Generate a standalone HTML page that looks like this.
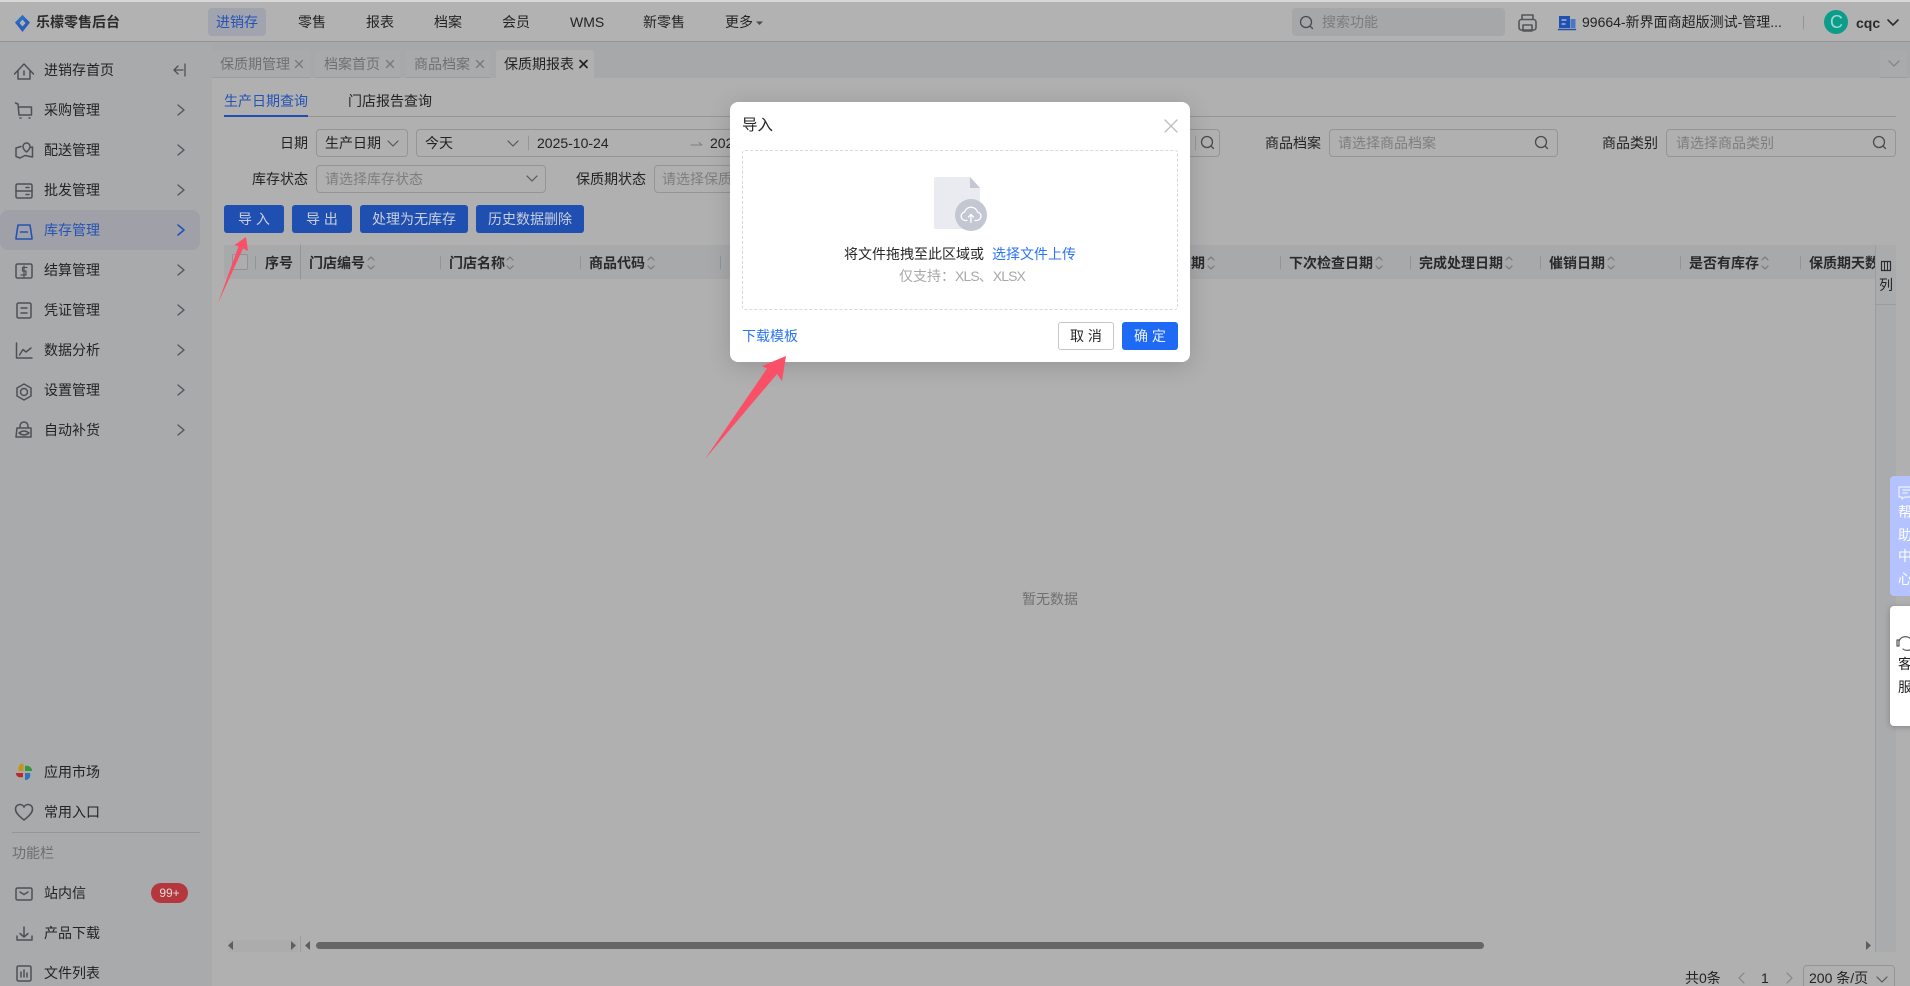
<!DOCTYPE html>
<html lang="zh-CN">
<head>
<meta charset="utf-8">
<title>保质期报表</title>
<style>
html,body{margin:0;padding:0;width:1910px;height:986px;overflow:hidden;background:#b0b0b0}
body{position:relative;font:14px/20px "Liberation Sans","Noto Sans CJK SC",sans-serif;color:#232323}
div,span{position:absolute;box-sizing:border-box}
.t{white-space:nowrap;height:20px;line-height:20px}
.r{text-align:right}
.dim{color:#6f7072}
.ph{color:#7e7e80}
.b{font-weight:700;color:#2a2a2a}
.box{border:1px solid #959597;border-radius:4px;height:28px}
.btn{top:205px;height:28px;background:#1f4fb0;color:#c9cfdc;border-radius:3px;text-align:center;line-height:28px;white-space:nowrap}
.tab{top:50px;height:28px;background:#a9aaac;border-radius:3px 3px 0 0;border-bottom:1px solid #9c9d9f}
svg{position:absolute;left:0;top:0;overflow:visible}
</style>
</head>
<body>
<!-- chrome backgrounds -->
<div style="left:0;top:0;width:1910px;height:2px;background:#d8d8d8"></div>
<div style="left:0;top:2px;width:1910px;height:40px;background:#b2b2b2;border-bottom:1px solid #949495"></div>
<div style="left:0;top:42px;width:212px;height:944px;background:#a9aaac"></div>
<div style="left:212px;top:42px;width:1698px;height:36px;background:#a7a8aa"></div>
<div style="left:0;top:210px;width:200px;height:40px;background:#a0a1a8;border-radius:8px"></div>

<!-- top bar -->
<div class="t b" style="left:36px;top:12px;font-size:14px;color:#2c2c2e">乐檬零售后台</div>
<div style="left:208px;top:8px;width:58px;height:28px;background:#a1a4ae;border-radius:4px"></div>
<div class="t" style="left:216px;top:12px;color:#2552b5">进销存</div>
<div class="t" style="left:298px;top:12px">零售</div>
<div class="t" style="left:366px;top:12px">报表</div>
<div class="t" style="left:434px;top:12px">档案</div>
<div class="t" style="left:502px;top:12px">会员</div>
<div class="t" style="left:570px;top:12px">WMS</div>
<div class="t" style="left:643px;top:12px">新零售</div>
<div class="t" style="left:725px;top:12px">更多</div>
<div style="left:1292px;top:8px;width:213px;height:28px;background:#a6a7a9;border-radius:4px"></div>
<div class="t" style="left:1322px;top:12px;color:#7b7c7e">搜索功能</div>
<div class="t" style="left:1582px;top:12px;width:205px">99664-新界面商超版测试-管理...</div>
<div style="left:1824px;top:10px;width:24px;height:24px;border-radius:50%;background:#0c9d8a"></div>
<div class="t" style="left:1830px;top:12px;color:#9fd8d0;font-size:18px">C</div>
<div class="t b" style="left:1856px;top:13px">cqc</div>

<!-- tabs -->
<div class="tab" style="left:212px;width:98px"></div>
<div class="tab" style="left:315px;width:85px"></div>
<div class="tab" style="left:406px;width:84px"></div>
<div class="tab" style="left:496px;width:98px;background:#b0b0b0;border-bottom:0"></div>
<div class="tab" style="left:1880px;width:27px;background:#a9aaac"></div>
<div class="t dim" style="left:220px;top:54px">保质期管理</div>
<div class="t dim" style="left:324px;top:54px">档案首页</div>
<div class="t dim" style="left:414px;top:54px">商品档案</div>
<div class="t" style="left:504px;top:54px">保质期报表</div>

<!-- sidebar -->
<div class="t" style="left:44px;top:60px">进销存首页</div>
<div class="t" style="left:44px;top:100px">采购管理</div>
<div class="t" style="left:44px;top:140px">配送管理</div>
<div class="t" style="left:44px;top:180px">批发管理</div>
<div class="t" style="left:44px;top:220px;color:#2552b5">库存管理</div>
<div class="t" style="left:44px;top:260px">结算管理</div>
<div class="t" style="left:44px;top:300px">凭证管理</div>
<div class="t" style="left:44px;top:340px">数据分析</div>
<div class="t" style="left:44px;top:380px">设置管理</div>
<div class="t" style="left:44px;top:420px">自动补货</div>
<div class="t" style="left:44px;top:762px">应用市场</div>
<div class="t" style="left:44px;top:802px">常用入口</div>
<div style="left:12px;top:832px;width:188px;height:1px;background:#949597"></div>
<div class="t" style="left:12px;top:843px;color:#6e6e70">功能栏</div>
<div class="t" style="left:44px;top:883px">站内信</div>
<div style="left:151px;top:883px;width:37px;height:20px;border-radius:10px;background:#b5373d;color:#ddd;text-align:center;line-height:20px;font-size:12px">99+</div>
<div class="t" style="left:44px;top:923px">产品下载</div>
<div class="t" style="left:44px;top:963px">文件列表</div>

<!-- sub tabs -->
<div class="t" style="left:224px;top:91px;color:#2552b5">生产日期查询</div>
<div class="t" style="left:348px;top:91px">门店报告查询</div>
<div style="left:224px;top:116px;width:1672px;height:1px;background:#949597"></div>
<div style="left:224px;top:115px;width:84px;height:2px;background:#1f4fb0"></div>

<!-- form row 1 -->
<div class="t r" style="left:258px;width:50px;top:133px">日期</div>
<div class="box" style="left:316px;top:129px;width:92px"></div>
<div class="t" style="left:325px;top:133px">生产日期</div>
<div class="box" style="left:416px;top:129px;width:804px"></div>
<div class="t" style="left:425px;top:133px">今天</div>
<div class="t" style="left:537px;top:133px">2025-10-24</div>
<div class="t" style="left:710px;top:133px">2025-10-24</div>
<div class="t r" style="left:1250px;width:71px;top:133px">商品档案</div>
<div class="box" style="left:1329px;top:129px;width:229px"></div>
<div class="t ph" style="left:1338px;top:133px">请选择商品档案</div>
<div class="t r" style="left:1590px;width:68px;top:133px">商品类别</div>
<div class="box" style="left:1666px;top:129px;width:230px"></div>
<div class="t ph" style="left:1676px;top:133px">请选择商品类别</div>

<!-- form row 2 -->
<div class="t r" style="left:238px;width:70px;top:169px">库存状态</div>
<div class="box" style="left:316px;top:165px;width:230px"></div>
<div class="t ph" style="left:325px;top:169px">请选择库存状态</div>
<div class="t" style="left:576px;top:169px">保质期状态</div>
<div class="box" style="left:654px;top:165px;width:230px"></div>
<div class="t ph" style="left:662px;top:169px">请选择保质期状态</div>

<!-- action buttons -->
<div class="btn" style="left:224px;width:60px">导 入</div>
<div class="btn" style="left:292px;width:60px">导 出</div>
<div class="btn" style="left:360px;width:108px">处理为无库存</div>
<div class="btn" style="left:476px;width:108px">历史数据删除</div>

<!-- table header -->
<div style="left:224px;top:245px;width:1652px;height:34px;background:#a8a9ab"></div>
<div style="left:1875px;top:245px;width:21px;height:707px;background:#aaabad;border-left:1px solid #9b9c9e"></div>
<div style="left:1876px;top:304px;width:20px;height:1px;background:#9b9c9e"></div>
<div style="left:232px;top:254px;width:16px;height:16px;border:1px solid #929294;border-radius:2px;background:#adadae"></div>
<div class="t b" style="left:265px;top:253px">序号</div>
<div class="t b" style="left:309px;top:253px">门店编号</div>
<div class="t b" style="left:449px;top:253px">门店名称</div>
<div class="t b" style="left:589px;top:253px">商品代码</div>
<div class="t b" style="left:1177px;top:253px">日期</div>
<div class="t b" style="left:1289px;top:253px">下次检查日期</div>
<div class="t b" style="left:1419px;top:253px">完成处理日期</div>
<div class="t b" style="left:1549px;top:253px">催销日期</div>
<div class="t b" style="left:1689px;top:253px">是否有库存</div>
<div class="t b" style="left:1809px;top:253px;width:66px;overflow:hidden">保质期天数</div>
<div class="t" style="left:1879px;top:275px">列</div>
<div class="t" style="left:1022px;top:589px;color:#6f7072">暂无数据</div>

<!-- pagination -->
<div class="t" style="left:1685px;top:968px">共0条</div>
<div class="t" style="left:1761px;top:968px">1</div>
<div style="left:1803px;top:965px;width:92px;height:28px;border:1px solid #959597;border-radius:4px"></div>
<div class="t" style="left:1809px;top:968px">200 条/页</div>

<!-- floating panels -->
<div style="left:1890px;top:476px;width:30px;height:120px;background:#b4c3ff;border-radius:4px"></div>
<div style="left:1890px;top:606px;width:30px;height:120px;background:#fff;border-radius:4px;box-shadow:0 1px 6px rgba(0,0,0,.25)"></div>
<div class="t" style="left:1898px;top:502px;color:#fff">帮</div>
<div class="t" style="left:1898px;top:525px;color:#fff">助</div>
<div class="t" style="left:1898px;top:546px;color:#fff">中</div>
<div class="t" style="left:1898px;top:569px;color:#fff">心</div>
<div class="t" style="left:1898px;top:654px">客</div>
<div class="t" style="left:1898px;top:677px">服</div>

<!-- icons / lines -->
<svg width="1910" height="986" viewBox="0 0 1910 986" fill="none" stroke-linecap="round" stroke-linejoin="round">
<defs>
<symbol id="ch" overflow="visible"><path d="M-3 -5L3 0L-3 5" stroke="#55565a" stroke-width="1.4" fill="none"/></symbol>
<symbol id="dn" overflow="visible"><path d="M-5 -3L0 2L5 -3" stroke="#55565a" stroke-width="1.2" fill="none"/></symbol>
<symbol id="so" overflow="visible"><path d="M-3 -3L0 -6L3 -3M-3 3L0 6L3 3" stroke="#77787a" stroke-width="1.2" fill="none"/></symbol>
<symbol id="se" overflow="visible"><circle cx="-1" cy="-1" r="5.5" stroke="#4a4b4e" stroke-width="1.3" fill="none"/><path d="M3 3L5.5 5.5" stroke="#4a4b4e" stroke-width="1.3"/></symbol>
<symbol id="xx" overflow="visible"><path d="M-3.500 -3.500L3.500 3.500M3.500 -3.500L-3.500 3.500" stroke="#77787a" stroke-width="1.3"/></symbol>
</defs>

<!-- logo -->
<path d="M22.500 15L30 22.500L22.500 32L15 22.500Z" fill="#2c5fbc"/>
<path d="M22.500 15L26 19L22.500 19.500L18.500 23L15 22.500Z" fill="#2372c8"/>
<path d="M22.500 19.500L25.500 23L22.500 26.500L19.500 23Z" fill="#b2b2b2"/>
<!-- 更多 caret -->
<path d="M756 24.500H763L759.500 28Z" fill="#4a4a4a" transform="translate(0 -3)"/>
<use href="#se" x="1307" y="23"/>
<!-- printer -->
<g stroke="#55565a" stroke-width="1.600"><path d="M1522 19V15H1533V19"/><rect x="1519" y="19.500" width="17" height="10.500" rx="2.500"/><path d="M1523 25H1532V31H1523Z"/></g>
<!-- store -->
<path d="M1559 16H1570V28H1559Z" fill="#2050b0"/><path d="M1570.500 19H1575.500V28H1570.500Z" fill="#4a78c0"/><path d="M1558.500 29.500H1575.500" stroke="#2050b0" stroke-width="1.500"/>
<path d="M1562 20H1566M1562 24H1565" stroke="#c3cbdc" stroke-width="1.200"/>
<path d="M1803.500 16V29" stroke="#959597"/>
<path d="M1888 20L1893 25L1898 20" stroke="#2c2c2c" stroke-width="1.600"/>
<path d="M1889 61L1894 66L1899 61" stroke="#85868a" stroke-width="1.300"/>

<!-- tab close -->
<use href="#xx" x="299" y="64"/><use href="#xx" x="390" y="64"/><use href="#xx" x="480" y="64"/>
<path d="M580 60.500L587 67.500M587 60.500L580 67.500" stroke="#222" stroke-width="1.700"/>

<!-- sidebar icons -->
<g stroke="#4f5054" stroke-width="1.500">
<path d="M14.500 74L24 64L33.500 74M18 71V79H30V71M24 71V75"/>
<path d="M185 64V76M183 70H174M178 66L174 70L178 74" stroke-width="1.300"/>
<path d="M15.500 103L18 104L19 115H31.500V107H19M20 118H21M29 118H30"/>
<path d="M21 146.500L16 148V156.500L20 158L25 155.500L32.500 157V147L31 147.500"/><path d="M26.500 152C24 150 23 148.500 23 146.500A3.500 3.500 0 0 1 30 146.500C30 148.500 29 150 26.500 152Z"/>
<rect x="16" y="184" width="16" height="14" rx="1.500"/><path d="M16 191H32M26 187.500H29M26 194.500H29"/>
<g stroke="#2552b5" stroke-width="1.600"><path d="M16 238L18 225H30L32 238V239H16Z"/><path d="M20.500 232H27.500"/></g>
<rect x="16" y="264" width="16" height="14" rx="1.500"/><path d="M27 267.500H22.500V271H26V275H21M24 266V277" stroke-width="1.200"/>
<rect x="17" y="303" width="14" height="15" rx="1.500"/><path d="M21 308H27M21 313H27"/>
<path d="M16.500 343V358H32M19.500 355L23 349.500L26 352L31 348"/>
<path d="M24 384L31 388V396L24 400L17 396V388Z"/><circle cx="24" cy="392" r="3.500"/>
<path d="M20 428V426A4 4 0 0 1 28 426V428M17 428H31V437H16ZM19 433Q24 429 29 433Q24 437 19 433Z"/>
</g>
<g>
<use href="#ch" x="181" y="110"/><use href="#ch" x="181" y="150"/><use href="#ch" x="181" y="190"/>
<path d="M178 225L184 230L178 235" stroke="#2552b5" stroke-width="1.600"/>
<use href="#ch" x="181" y="270"/><use href="#ch" x="181" y="310"/><use href="#ch" x="181" y="350"/><use href="#ch" x="181" y="390"/><use href="#ch" x="181" y="430"/>
</g>
<!-- app market -->
<path d="M23.500 771V764C20 763 18 766 18.500 771Z" fill="#c9920f"/><path d="M25 771H32C32.500 768 29 765 25 766Z" fill="#2f9a3c"/><path d="M23 773H16C16 777 19.500 778 23 777Z" fill="#bb2a2a"/><path d="M25 773V780C29 780 31 777 30 773Z" fill="#2f73b8"/>
<path d="M24 820C16 814 15.500 811 15.500 809C15.500 804 22 803 24 807C26 803 32.500 804 32.500 809C32.500 811 32 814 24 820Z" stroke="#4f5054" stroke-width="1.600"/>
<g stroke="#4f5054" stroke-width="1.500">
<rect x="16" y="888" width="16" height="12" rx="1.500"/><path d="M20 892L24 894.500L28 892"/>
<path d="M24 927V937M20 933.500L24 937L28 933.500M17 936V940H32V936"/>
<rect x="17" y="966" width="14" height="15" rx="1.500"/><path d="M21 977V972M24 977V970M27 977V973"/>
</g>

<!-- form icons -->
<use href="#dn" x="393" y="144"/><use href="#dn" x="513" y="144"/>
<path d="M528.500 136V150" stroke="#959597"/>
<path d="M691 145H702L699 142.500" stroke="#7d7e80" stroke-width="1"/>
<path d="M1195.500 136V150" stroke="#959597"/>
<use href="#se" x="1208" y="143"/>
<use href="#se" x="1542" y="143"/><use href="#se" x="1880" y="143"/>
<use href="#dn" x="532" y="179"/>

<!-- table header lines -->
<g stroke="#939496"><path d="M255.500 256V269M440.500 256V269M580.500 256V269M720.500 256V269M1280.500 256V269M1410.500 256V269M1540.500 256V269M1680.500 256V269M1800.500 256V269"/><path d="M300.500 245V279"/></g>
<use href="#so" x="371" y="263"/><use href="#so" x="510" y="263"/><use href="#so" x="651" y="263"/><use href="#so" x="1211" y="263"/><use href="#so" x="1379" y="263"/><use href="#so" x="1509" y="263"/><use href="#so" x="1611" y="263"/><use href="#so" x="1765" y="263"/>
<rect x="1881.500" y="261.500" width="9" height="9" stroke="#2c2c2c" stroke-width="1.200"/><path d="M1884.500 262V270M1887.500 262V270" stroke="#2c2c2c"/>

<!-- scrollbars -->
<rect x="228" y="940" width="70" height="12" fill="#acacad" stroke="none"/>
<path d="M233 941L228 945.500L233 950ZM291 941L296 945.500L291 950ZM310 941L305 945.500L310 950ZM1866 941L1871 945.500L1866 950Z" fill="#5c5d5f"/>
<path d="M300.500 936V952" stroke="#9c9d9f"/>
<rect x="316" y="942" width="1168" height="7" rx="3.500" fill="#666"/>

<!-- pagination icons -->
<path d="M1744 973L1739 978L1744 983M1787 973L1792 978L1787 983" stroke="#838486" stroke-width="1.200"/>
<use href="#dn" x="1882" y="980"/>

<!-- float icons -->
<path d="M1899 487H1912V497H1905L1902 499V497H1899ZM1903 490H1910M1903 493H1907" stroke="#eef1ff" stroke-width="1.200"/>
<path d="M1899 646V641A7 7 0 0 1 1912 641M1899 640H1897V646H1899M1910 650Q1905 651 1903 649" stroke="#55565a" stroke-width="1.200"/>
</svg>

<!-- overlay modal -->
<div style="left:730px;top:102px;width:460px;height:260px;background:#fff;border-radius:8px;box-shadow:0 4px 24px rgba(0,0,0,.16)"></div>
<div class="t" style="left:742px;top:116px;font-size:15.500px;color:#262626">导入</div>
<div style="left:742px;top:150px;width:436px;height:160px;border:1px dashed #d8d8d8;border-radius:3px"></div>
<div class="t" style="left:844px;top:244px;color:#262626">将文件拖拽至此区域或</div>
<div class="t" style="left:992px;top:244px;color:#2a74f5">选择文件上传</div>
<div class="t" style="left:899px;top:266px;color:#a8a8a8">仅支持：<span style="position:static;letter-spacing:-.9px">XLS</span>、<span style="position:static;letter-spacing:-.9px">XLSX</span></div>
<div class="t" style="left:742px;top:326px;color:#2a74f5">下载模板</div>
<div style="left:1058px;top:322px;width:56px;height:28px;border:1px solid #c6c6c6;border-radius:3px;background:#fff;text-align:center;line-height:26px;color:#262626;white-space:nowrap">取 消</div>
<div style="left:1122px;top:322px;width:56px;height:28px;border-radius:3px;background:#1f6af5;text-align:center;line-height:28px;color:#e9effd;white-space:nowrap">确 定</div>
<svg width="1910" height="986" viewBox="0 0 1910 986" fill="none" stroke-linecap="round" stroke-linejoin="round">
<path d="M1165 120L1177 132M1177 120L1165 132" stroke="#bcbcbc" stroke-width="1.300"/>
<path d="M936 177H970L980 188V229H936Q934 229 934 227V179Q934 177 936 177Z" fill="#e9ebf0"/>
<path d="M970 177L980 188H970Z" fill="#c3c7d2"/>
<circle cx="971" cy="215" r="16" fill="#c3c7d2"/>
<path d="M967 220.500H965.500A4.300 4.300 0 0 1 964.500 212A6.800 6.800 0 0 1 977.500 212A4.300 4.300 0 0 1 977 220.500H975" stroke="#fff" stroke-width="1.300"/>
<path d="M971 222.500V214.500M968.500 217L971 214.500L973.500 217" stroke="#fff" stroke-width="1.300"/>
<!-- arrows -->
<path d="M218 303L238.500 246.500L234.500 245L246 237L248 251L243 248.500Z" fill="#f95068"/>
<path d="M705 459L767 368.500L762 366L786 356L782 381L777 374Z" fill="#f95068"/>
</svg>
</body>
</html>
